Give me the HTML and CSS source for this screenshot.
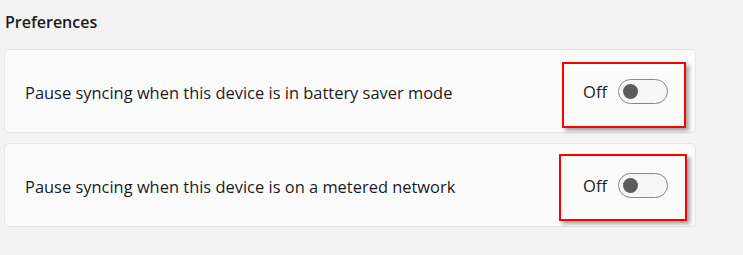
FILE: index.html
```html
<!DOCTYPE html>
<html lang="en">
<head>
<meta charset="utf-8">
<title>Preferences</title>
<link rel="stylesheet" href="styles.css">
</head>
<body>
<main class="page">
  <h2 class="section-title">Preferences</h2>
  <div class="card card-first">
    <span class="card-label">Pause syncing when this device is in battery saver mode</span>
    <div class="control">
      <span class="state">Off</span>
      <span class="toggle"><span class="knob"></span></span>
    </div>
    <div class="mark mark-one"></div>
  </div>
  <div class="card card-second">
    <span class="card-label">Pause syncing when this device is on a metered network</span>
    <div class="control">
      <span class="state">Off</span>
      <span class="toggle"><span class="knob"></span></span>
    </div>
    <div class="mark mark-two"></div>
  </div>
</main>
</body>
</html>
```
FILE: styles.css
```css
html, body {
  margin: 0;
  padding: 0;
  background: #f3f3f3;
}
body {
  font-family: "Open Sans", "Noto Sans", sans-serif;
  color: #1b1b1b;
}
.page {
  width: 692px;
  padding: 0 0 0 4px;
}
.section-title {
  margin: 0;
  padding: 11px 0 0 1px;
  height: 49px;
  box-sizing: border-box;
  font-size: 16px;
  font-weight: 600;
  line-height: 22px;
}
.card {
  position: relative;
  box-sizing: border-box;
  height: 84px;
  background: #fbfbfb;
  border: 1px solid #e6e6e6;
  border-radius: 5px;
  display: flex;
  align-items: center;
  justify-content: space-between;
  padding: 0 27px 0 20px;
}
.card-second {
  margin-top: 10px;
}
.card-label {
  font-size: 16.45px;
  padding-top: 2px;
}
.control {
  display: flex;
  align-items: center;
  gap: 11px;
}
.state {
  font-size: 16.5px;
  padding-top: 1px;
}
.toggle {
  box-sizing: border-box;
  width: 50px;
  height: 25px;
  border: 1px solid #8a8a8a;
  border-radius: 13px;
  background: #f6f6f6;
  display: flex;
  align-items: center;
  padding-left: 4px;
}
.knob {
  width: 15px;
  height: 15px;
  border-radius: 50%;
  background: #5c5c5c;
}
.mark {
  position: absolute;
  border: 2px solid #ff0000;
  box-shadow: 3px 3px 4px rgba(0, 0, 0, 0.35);
  box-sizing: border-box;
}
.mark-one {
  left: 557px;
  top: 12px;
  width: 124px;
  height: 66px;
}
.mark-two {
  left: 554px;
  top: 10px;
  width: 128px;
  height: 67px;
}
```
